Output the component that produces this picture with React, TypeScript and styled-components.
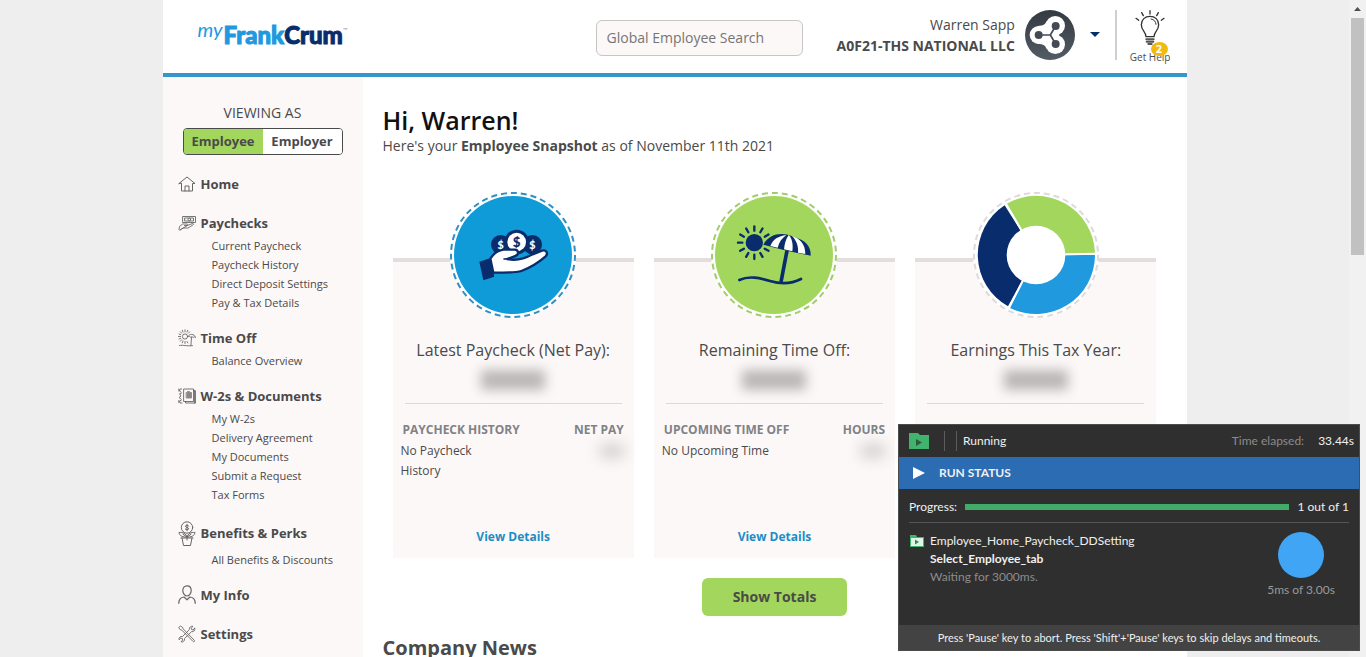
import React from "react";
import styled, { createGlobalStyle } from "styled-components";

const NAVY = "#082c6c";
const GREEN = "#a3d65c";
const BLUE = "#3596cb";
const TINT = "#fcf8f8";
const TEXT = "#4a4a4a";

const GlobalStyle = createGlobalStyle`
  * { box-sizing: border-box; }
  body { margin: 0; background: #eeeeee; color: ${TEXT}; font-family: "Open Sans", sans-serif; font-size: 14px; }
  h1, h2, h3, p, ul { margin: 0; padding: 0; }
  ul { list-style: none; }
  a { color: inherit; text-decoration: none; }
  button, input { font-family: inherit; }
`;

/* ---------- frame ---------- */

const Frame = styled.div`
  display: flex;
  height: 100vh;
  overflow: hidden;
`;

const Viewport = styled.div`
  flex: 1;
  min-width: 0;
  overflow: hidden;
`;

const Page = styled.div`
  max-width: 1024px;
  margin: 0 auto;
  background: #fff;
`;

const ScrollTrack = styled.div`
  display: flex;
  flex-direction: column;
  align-items: center;
  width: 17px;
  background: #f1f1f1;
`;

const ScrollArrow = styled.svg`
  display: block;
  width: 17px;
  height: 18px;
  flex: none;
`;

const ScrollThumb = styled.div`
  width: 13px;
  height: 36%;
  background: #c1c1c1;
`;

/* ---------- header ---------- */

const Header = styled.header`
  display: flex;
  align-items: center;
  height: 77px;
  padding: 0 16px 4px 35px;
  border-bottom: 4px solid ${BLUE};
`;

const Logo = styled.a`
  display: flex;
  align-items: flex-start;
  margin-right: auto;
  font-family: Lato, sans-serif;
  font-size: 24px;
  line-height: 36px;
  font-weight: 900;
  color: #2199df;
`;

const LogoMy = styled.span`
  margin-right: 1px;
  font-size: 20px;
  line-height: 24px;
  font-weight: 400;
  font-style: italic;
`;

const LogoWord = styled.span<{ $dark?: boolean }>`
  color: ${(p) => (p.$dark ? NAVY : "#2199df")};
  -webkit-text-stroke: 1px currentColor;
`;

const LogoMark = styled.span`
  margin-top: 10px;
  font-size: 6px;
  line-height: 6px;
  font-weight: 400;
  color: #8c8fb5;
`;

const SearchInput = styled.input`
  width: 207px;
  height: 36px;
  margin: 6px 34px 0 0;
  padding: 0 10px;
  border: 1px solid #c9c5c5;
  border-radius: 6px;
  background: ${TINT};
  color: ${TEXT};
  font-size: 14px;
  &::placeholder { color: #757575; opacity: 1; }
`;

const Account = styled.div`
  text-align: right;
  line-height: 21px;
  margin-right: 10px;
`;

const AccountCompany = styled.strong`
  display: block;
`;

const Avatar = styled.svg`
  display: block;
  width: 50px;
  height: 50px;
`;

const CaretButton = styled.button`
  display: flex;
  align-items: center;
  justify-content: center;
  width: 40px;
  height: 50px;
  padding: 0;
  border: 0;
  background: none;
`;

const HelpLink = styled.a`
  position: relative;
  display: flex;
  flex-direction: column;
  align-items: center;
  gap: 4px;
  height: 50px;
  padding-left: 13px;
  border-left: 2px solid #cfcfcf;
  font-size: 10px;
  line-height: 14px;
  white-space: nowrap;
`;

const HelpBulb = styled.svg`
  display: block;
  flex: none;
`;

const HelpBadge = styled.span`
  position: absolute;
  right: 3px;
  top: 32px;
  width: 17px;
  height: 14px;
  border-radius: 50%;
  background: #f2b90f;
  color: #fff;
  font-size: 11px;
  font-weight: 700;
  line-height: 14px;
  text-align: center;
`;

/* ---------- sidebar ---------- */

const Body = styled.div`
  display: flex;
  align-items: stretch;
`;

const Sidebar = styled.aside`
  width: 200px;
  flex: none;
  padding: 26px 20px 20px;
  background: ${TINT};
`;

const ViewingAs = styled.p`
  line-height: 20px;
  text-align: center;
`;

const Toggle = styled.div`
  display: flex;
  height: 27px;
  margin: 5px 0 19px;
  border: 1px solid ${TEXT};
  border-radius: 4px;
  overflow: hidden;
`;

const ToggleButton = styled.button<{ $active?: boolean }>`
  flex: 1;
  padding: 0 0 2px;
  border: 0;
  background: ${(p) => (p.$active ? GREEN : "#fff")};
  color: ${TEXT};
  font-size: 13px;
  font-weight: 700;
`;

const NavGroup = styled.section`
  display: flex;
  flex-direction: column;
  gap: 4px;
  margin: 0 0 16px -5px;
`;

const NavHeading = styled.h3<{ $tall?: boolean }>`
  display: flex;
  align-items: center;
  gap: 5px;
  height: ${(p) => (p.$tall ? 26 : 19)}px;
  font-size: 13px;
  font-weight: 700;
`;

const NavIcon = styled.svg`
  display: block;
  width: 18px;
  flex: none;
  fill: none;
  stroke: #666;
  stroke-linecap: round;
  stroke-linejoin: round;
`;

const NavList = styled.ul`
  padding-left: 34px;
  font-size: 11px;
  line-height: 19px;
`;

/* ---------- main ---------- */

const Main = styled.main`
  flex: 1;
  min-width: 0;
  padding: 27px 20px 20px;
`;

const Greeting = styled.h1`
  font-size: 25px;
  line-height: 32px;
  font-weight: 600;
  color: #111;
`;

const Subline = styled.p`
  font-size: 14px;
  line-height: 20px;
`;

const Cards = styled.div`
  display: grid;
  grid-template-columns: repeat(3, 1fr);
  gap: 20px;
  padding: 102px 10px 20px;
`;

const Card = styled.article`
  display: flex;
  flex-direction: column;
  align-items: center;
  min-height: 300px;
  padding: 0 8px 11px;
  border-top: 4px solid #e3dedd;
  background: ${TINT};
`;

const Medallion = styled.svg`
  display: block;
  width: 126px;
  height: 126px;
  margin-top: -70px;
`;

const CardTitle = styled.h2`
  margin-top: 20px;
  font-size: 16px;
  line-height: 24px;
  font-weight: 400;
`;

const MaskedTotal = styled.div`
  width: 64px;
  height: 20px;
  margin: 8px 0 13px;
  background: #bab6b6;
  filter: blur(6px);
`;

const Rule = styled.hr`
  width: calc(100% - 8px);
  margin: 0 0 16px;
  border: 0;
  border-top: 1px solid #dcd8d8;
`;

const HistoryTable = styled.table`
  width: 100%;
  border-collapse: collapse;
  font-size: 12px;
  line-height: 20px;
`;

const HeadCell = styled.th<{ $right?: boolean }>`
  padding: 0 2px;
  color: #808285;
  font-weight: 700;
  white-space: nowrap;
  text-align: ${(p) => (p.$right ? "right" : "left")};
`;

const Cell = styled.td`
  padding: 1px 0;
  vertical-align: top;
`;

const CellText = styled.span`
  display: block;
  width: 112px;
`;

const MaskedValue = styled.div`
  width: 24px;
  height: 14px;
  margin: 3px 2px 0 auto;
  background: #d4d0d0;
  filter: blur(7px);
`;

const DetailsLink = styled.a`
  margin-top: auto;
  color: #1b8dc6;
  font-size: 12px;
  font-weight: 700;
  line-height: 20px;
`;

const TotalsButton = styled.button`
  display: block;
  width: 145px;
  height: 38px;
  margin: 0 auto;
  padding: 0 0 2px;
  border: 0;
  border-radius: 6px;
  background: ${GREEN};
  color: ${TEXT};
  font-size: 14px;
  font-weight: 700;
`;

const SectionTitle = styled.h2`
  margin-top: 18px;
  font-size: 20px;
  line-height: 28px;
  font-weight: 700;
`;

/* ---------- run status window ---------- */

const RunWindow = styled.section`
  position: fixed;
  right: 6px;
  bottom: 6px;
  width: 462px;
  border: 1px solid #4c4c4c;
  background: #2f2f2f;
  color: #f0f0f0;
  font-family: Lato, sans-serif;
  font-size: 12px;
  line-height: 18px;
`;

const RunHeader = styled.div`
  display: flex;
  align-items: center;
  height: 32px;
  padding: 0 5px 0 10px;
`;

const RunDivider = styled.span<{ $gap: number }>`
  width: 1px;
  height: 20px;
  margin-left: ${(p) => p.$gap}px;
  background: #5c5c5c;
`;

const RunState = styled.span`
  margin: 0 auto 0 6px;
`;

const Muted = styled.span`
  color: #8c8c8c;
`;

const Elapsed = styled.span`
  margin-left: 14px;
`;

const RunBanner = styled.div`
  display: flex;
  align-items: center;
  gap: 14px;
  height: 32px;
  padding-left: 14px;
  background: #2b6cb3;
  font-weight: 700;
`;

const RunProgress = styled.div`
  display: flex;
  align-items: center;
  gap: 8px;
  height: 34px;
  margin: 0 10px;
  padding-top: 2px;
  border-bottom: 1px solid #555;
`;

const ProgressBar = styled.div`
  flex: 1;
  height: 6px;
  background: #43ab6a;
`;

const RunTask = styled.div`
  display: flex;
  align-items: flex-start;
  gap: 6px;
  height: 102px;
  padding: 9px 24px 0 11px;
`;

const TaskIcon = styled.svg`
  display: block;
  margin-top: 3px;
  flex: none;
`;

const TaskStep = styled.div`
  font-weight: 700;
`;

const TaskTimer = styled.div`
  display: flex;
  flex-direction: column;
  align-items: center;
  gap: 3px;
  margin-left: auto;
  color: #9a9a9a;
`;

const TimerDisc = styled.div`
  width: 46px;
  height: 46px;
  border-radius: 50%;
  background: #40a5f5;
`;

const RunFooter = styled.div`
  height: 25px;
  background: #434343;
  font-size: 11px;
  line-height: 25px;
  text-align: center;
`;

/* ---------- drawings ---------- */

const HomeIcon = () => (
  <NavIcon height="16" viewBox="0 0 18 16">
    <path d="M1 7.5 9 1l8 6.500h-2.500V15h-11V7.500zM7 15V10h4v5" />
  </NavIcon>
);
const PaychecksIcon = () => (
  <NavIcon height="16" viewBox="0 0 18 16" strokeWidth="0.9">
    <path d="M5 1.500h12.500v6H5zM7 3h8.500v3H7z" />
    <circle cx="11.300" cy="4.500" r="1.300" />
    <path d="M1 14.500l.5-3 3-2.500h4.500c1 0 1 1.500 0 1.500H6.500M9.500 10.500l5-2c1-.3 1.500.8.6 1.300l-5 3.200H5L2 15z" />
  </NavIcon>
);
const TimeOffIcon = () => (
  <NavIcon height="18" viewBox="0 0 18 18" strokeWidth="0.9">
    <circle cx="7" cy="7.500" r="2.600" />
    <path d="M7 .8v2M7 12.500v2M.5 7.500h2M2.300 2.800l1.400 1.400M2.300 12.200l1.400-1.400M4.300 1.300l.7 1.700M9.700 1.300L9 3M11.700 2.800l-1.400 1.400M4.300 13.700l.7-1.700M1 5l1.700.7M1 10l1.700-.7M9 12.500l.8 1.400" />
    <path d="M10 7.500c1-3 6.500-3 7.500 1-1-.8-1.700-.5-2.300 0-.9-.9-1.800-.9-2.600-.3-.8-.8-1.800-1-2.600-.7zM13.500 8.500l-.6 8M1.500 16.500c4-.8 6 .8 13 .2" />
  </NavIcon>
);
const DocumentsIcon = () => (
  <NavIcon height="16" viewBox="0 0 18 16" strokeWidth="0.9">
    <path d="M6 1h9.500v12.500H6zM15.500 2.500h1.500V15H7.500v-1.500" />
    <path d="M17 3v12" strokeWidth="1.500" />
    <path d="M8.500 4.500h1V3.500h2v1h2V10h-5z" fill="#888" stroke="#888" />
    <path d="M3.500 1H2l-.5 2L3 4M3.500 5l-2 .8L3 8l-2 1.500L3 11M3.500 12l-2 1 .5 2h2M.8 1v2M.8 12.500v2" />
  </NavIcon>
);
const BenefitsIcon = () => (
  <NavIcon height="25" viewBox="0 0 18 25">
    <circle cx="9" cy="6.500" r="5.700" />
    <path d="M10.700 5C10 4 7.400 4 7.400 5.300 7.400 6.700 10.800 6.200 10.700 7.800 10.600 9 8 9 7.200 8M9 3.300v6.500" />
    <path d="M9 16c-1-3.500-4-5-8-4.500.5 3.500 4 5 8 4.500zc1-3.500 4-5 8-4.500-.5 3.500-4 5-8 4.500zM5 13.300L9 16l4-2.700M9 16v3M3 17h12M4 17l1.500 7.500h7L14 17" />
  </NavIcon>
);
const InfoIcon = () => (
  <NavIcon height="19" viewBox="0 0 18 19" strokeWidth="1.200">
    <path d="M9 .8c2.700 0 4.200 2 4.200 4.700C13.200 8.500 11 11 9 11S4.800 8.500 4.800 5.500C4.800 2.800 6.300.8 9 .8zM.8 18.300C.8 14 3.500 12.300 6 12l3 2.800L12 12c2.500.3 5.200 2 5.200 6.300" />
  </NavIcon>
);
const SettingsIcon = () => (
  <NavIcon height="18" viewBox="0 0 18 18" strokeWidth="0.9">
    <path d="M1 2.200L2.300 1l2.500 1.500.3 1.300 11.200 11.500c.8.9-.4 2-1.200 1.200L3.900 5.200l-1.300-.4z" />
    <path d="M16.800 3.200c.6 2-1 4-3.300 3.500L6.600 13.500c.4 2.200-1.500 4-3.600 3.300l1.700-1.800-.4-1.500-1.500-.4L1 14.800C.5 12.700 2.500 11 4.500 11.500l6.800-6.800C11 2.500 13 .6 15 1.300l-1.800 1.800.4 1.400 1.400.4z" />
  </NavIcon>
);

const ProfileMark = () => (
  <Avatar viewBox="0 0 150 150" role="img" aria-label="Profile">
    <defs>
      <linearGradient id="slate" x1="0" y1="0" x2="0" y2="1">
        <stop offset="0" stopColor="#343a42" />
        <stop offset="1" stopColor="#535b64" />
      </linearGradient>
    </defs>
    <circle cx="75" cy="75" r="75" fill="url(#slate)" />
    <g fill="#fff">
      <circle cx="41" cy="75" r="27" />
      <circle cx="91" cy="47" r="29" />
      <circle cx="91" cy="103" r="29" />
      <path d="M38 48c18 0 24-6 26-14l40 41-40 41c-2-8-8-14-26-14z" />
    </g>
    <g stroke="#444b54" strokeWidth="5" fill="none">
      <path d="M41 75h35l16-27M76 75l16 27" />
    </g>
    <g fill="#444b54">
      <circle cx="41" cy="75" r="12" />
      <circle cx="92" cy="48" r="12" />
      <circle cx="92" cy="102" r="12" />
      <path d="M101 75l20-7v14z" />
    </g>
  </Avatar>
);

const Bulb = () => (
  <HelpBulb width="30" height="36" viewBox="0 0 90 108" fill="none" stroke="#333" strokeWidth="4" strokeLinecap="round">
    <path d="M33 80c0-14-14-18-14-36 0-15 11-25 26-25s26 10 26 25c0 18-14 22-14 36z" />
    <path d="M48 27c9 1 15 8 15 16" strokeWidth="3" />
    <path d="M45 2v10M20 8l5 9M70 8l-5 9M3 25l8 6M87 25l-8 6" />
    <path d="M34 88h22M35 95h20M40 102h10" stroke="#555" strokeWidth="6" />
  </HelpBulb>
);

type RingProps = { cx: number; color: string; fill: string; children?: React.ReactNode };
const Ring = ({ cx, color, fill, children }: RingProps) => (
  <Medallion viewBox={`${cx - 189} 36 378 378`} aria-hidden="true">
    <circle cx={cx} cy="225" r="189" fill="#fff" />
    <circle cx={cx} cy="225" r="186" fill="none" stroke={color} strokeWidth="6" pathLength="390" strokeDasharray="6 4" />
    <circle cx={cx} cy="225" r="177" fill={fill} />
    {children}
  </Medallion>
);

const PaycheckArt = () => (
  <Ring cx={369} color="#2f8fc4" fill="#0f9ad8">
    <g fill={NAVY}>
      <circle cx="332" cy="194" r="29" />
      <circle cx="427" cy="194" r="29" />
      <circle cx="380" cy="186" r="37" />
    </g>
    <circle cx="380" cy="186" r="28" fill="#fff" />
    <g fontFamily="Lato, sans-serif" fontWeight="900" textAnchor="middle">
      <text x="332" y="206" fontSize="32" fill="#fff">$</text>
      <text x="427" y="206" fontSize="32" fill="#fff">$</text>
      <text x="380" y="200" fontSize="40" fill={NAVY}>$</text>
    </g>
    <path
      d="M301 236C312 218 326 211 340 209h34c13 0 13 16 2 19l-24 9c25 6 54-2 76-14l28-11c13-4 20 9 10 18-22 19-44 33-72 43-18 6-40 4-84 5z"
      fill="#fff"
      stroke={NAVY}
      strokeWidth="7"
      strokeLinejoin="round"
    />
    <path d="M342 237c20 0 26-6 38-12" fill="none" stroke={NAVY} strokeWidth="5" strokeLinecap="round" />
    <path d="M268 245l32-10 13 55-33 11z" fill={NAVY} />
  </Ring>
);

const BeachArt = () => (
  <Ring cx={372} color="#a2cb6e" fill={GREEN}>
    <circle cx="313" cy="188" r="26" fill={NAVY} />
    <g stroke={NAVY} strokeWidth="7" strokeLinecap="round">
      {[0, 30, 60, 90, 120, 150, 180, 210, 240, 270, 300, 330].map((a) => (
        <path key={a} d="M313 152V139" transform={`rotate(${a} 313 188)`} />
      ))}
    </g>
    <path d="M340 194c20-36 60-38 92-23 32 8 52 28 50 56-48-10-96-20-142-33z" fill={NAVY} />
    <g fill="#fff">
      <path d="M361 198c8-20 24-30 48-33-14 10-22 22-26 38z" />
      <path d="M402 208c2-18 6-32 14-43 10 10 14 28 11 49z" />
      <path d="M444 218c2-18-4-36-18-50 26 8 40 26 40 54z" />
    </g>
    <path d="M411 212l-18 94" stroke={NAVY} strokeWidth="11" />
    <path d="M268 300c30-14 62-6 92 3 34 10 62 10 93-6" fill="none" stroke={NAVY} strokeWidth="8" strokeLinecap="round" />
  </Ring>
);

const EarningsArt = () => (
  <Ring cx={408} color="#dedada" fill="#fff">
    <path d="M408 225L320 71A177 177 0 0 1 585 219z" fill={GREEN} />
    <path d="M408 225H585A177 177 0 0 1 330 384z" fill="#2199df" />
    <path d="M408 225L324 379A177 177 0 0 1 314 76z" fill={NAVY} />
    <path d="M408 225L317 70M408 225L327 383M408 225l177-4" stroke="#fff" strokeWidth="6" />
    <circle cx="408" cy="225" r="88" fill="#fff" />
  </Ring>
);

/* ---------- content ---------- */

const navGroups = [
  { title: "Home", icon: <HomeIcon />, items: [] },
  {
    title: "Paychecks",
    icon: <PaychecksIcon />,
    items: ["Current Paycheck", "Paycheck History", "Direct Deposit Settings", "Pay & Tax Details"],
  },
  { title: "Time Off", icon: <TimeOffIcon />, items: ["Balance Overview"] },
  {
    title: "W-2s & Documents",
    icon: <DocumentsIcon />,
    items: ["My W-2s", "Delivery Agreement", "My Documents", "Submit a Request", "Tax Forms"],
  },
  { title: "Benefits & Perks", icon: <BenefitsIcon />, items: ["All Benefits & Discounts"], tall: true },
  { title: "My Info", icon: <InfoIcon />, items: [] },
  { title: "Settings", icon: <SettingsIcon />, items: [] },
];

const cards = [
  {
    title: "Latest Paycheck (Net Pay):",
    art: <PaycheckArt />,
    table: { left: "PAYCHECK HISTORY", right: "NET PAY", text: "No Paycheck History" },
  },
  {
    title: "Remaining Time Off:",
    art: <BeachArt />,
    table: { left: "UPCOMING TIME OFF", right: "HOURS", text: "No Upcoming Time" },
  },
  { title: "Earnings This Tax Year:", art: <EarningsArt /> },
];

export default function App() {
  return (
    <>
      <GlobalStyle />
      <Frame>
        <Viewport>
          <Page>
            <Header>
              <Logo href="#" aria-label="myFrankCrum">
                <LogoMy>my</LogoMy>
                <LogoWord>Frank</LogoWord>
                <LogoWord $dark>Crum</LogoWord>
                <LogoMark>™</LogoMark>
              </Logo>
              <SearchInput type="search" aria-label="Global Employee Search" placeholder="Global Employee Search" />
              <Account>
                Warren Sapp
                <AccountCompany>A0F21-THS NATIONAL LLC</AccountCompany>
              </Account>
              <ProfileMark />
              <CaretButton aria-label="Account menu">
                <svg width="10" height="5" viewBox="0 0 10 5">
                  <path d="M0 0h10L5 5z" fill={NAVY} />
                </svg>
              </CaretButton>
              <HelpLink href="#">
                <Bulb />
                <HelpBadge>2</HelpBadge>
                <span>Get Help</span>
              </HelpLink>
            </Header>

            <Body>
              <Sidebar>
                <ViewingAs>VIEWING AS</ViewingAs>
                <Toggle>
                  <ToggleButton $active>Employee</ToggleButton>
                  <ToggleButton>Employer</ToggleButton>
                </Toggle>
                <nav>
                  {navGroups.map((g) => (
                    <NavGroup key={g.title}>
                      <NavHeading $tall={g.tall}>
                        {g.icon}
                        <a href="#">{g.title}</a>
                      </NavHeading>
                      <NavList>
                        {g.items.map((item) => (
                          <li key={item}>
                            <a href="#">{item}</a>
                          </li>
                        ))}
                      </NavList>
                    </NavGroup>
                  ))}
                </nav>
              </Sidebar>

              <Main>
                <Greeting>Hi, Warren!</Greeting>
                <Subline>
                  Here's your <strong>Employee Snapshot</strong> as of November 11th 2021
                </Subline>
                <Cards>
                  {cards.map((c) => (
                    <Card key={c.title}>
                      {c.art}
                      <CardTitle>{c.title}</CardTitle>
                      <MaskedTotal />
                      <Rule />
                      {c.table && (
                        <>
                          <HistoryTable>
                            <thead>
                              <tr>
                                <HeadCell>{c.table.left}</HeadCell>
                                <HeadCell $right>{c.table.right}</HeadCell>
                              </tr>
                            </thead>
                            <tbody>
                              <tr>
                                <Cell>
                                  <CellText>{c.table.text}</CellText>
                                </Cell>
                                <Cell>
                                  <MaskedValue />
                                </Cell>
                              </tr>
                            </tbody>
                          </HistoryTable>
                          <DetailsLink href="#">View Details</DetailsLink>
                        </>
                      )}
                    </Card>
                  ))}
                </Cards>
                <TotalsButton>Show Totals</TotalsButton>
                <SectionTitle>Company News</SectionTitle>
              </Main>
            </Body>
          </Page>
        </Viewport>
        <ScrollTrack aria-hidden="true">
          <ScrollArrow viewBox="0 0 17 18">
            <path d="M5 11l3.500-4 3.500 4z" fill="#505050" />
          </ScrollArrow>
          <ScrollThumb />
        </ScrollTrack>
      </Frame>

      <RunWindow aria-label="Run status">
        <RunHeader>
          <svg width="20" height="18" viewBox="0 0 20 18">
            <path d="M0 1h9l2 2h9v14H0z" fill="#41b36c" />
            <path d="M7 7l6 3.500L7 14z" fill="#2a5c3d" />
          </svg>
          <RunDivider $gap={15} />
          <RunDivider $gap={11} />
          <RunState>Running</RunState>
          <Muted>Time elapsed:</Muted>
          <Elapsed>33.44s</Elapsed>
        </RunHeader>
        <RunBanner>
          <svg width="12" height="12" viewBox="0 0 12 12">
            <path d="M0 0l12 6-12 6z" fill="#fff" />
          </svg>
          RUN STATUS
        </RunBanner>
        <RunProgress>
          Progress:
          <ProgressBar role="progressbar" aria-label="Progress" aria-valuenow={1} aria-valuemin={0} aria-valuemax={1} />
          1 out of 1
        </RunProgress>
        <RunTask>
          <TaskIcon width="14" height="12" viewBox="0 0 14 12">
            <path d="M0 0h6l1 2h7v10H0z" fill="#41b36c" />
            <path d="M1 3h12v8H1z" fill="#dff5e6" />
            <path d="M5 4.500L9 7 5 9.500z" fill="#2e8b50" />
          </TaskIcon>
          <div>
            <div>Employee_Home_Paycheck_DDSetting</div>
            <TaskStep>Select_Employee_tab</TaskStep>
            <Muted>Waiting for 3000ms.</Muted>
          </div>
          <TaskTimer>
            <TimerDisc />
            5ms of 3.00s
          </TaskTimer>
        </RunTask>
        <RunFooter>Press 'Pause' key to abort. Press 'Shift'+'Pause' keys to skip delays and timeouts.</RunFooter>
      </RunWindow>
    </>
  );
}
